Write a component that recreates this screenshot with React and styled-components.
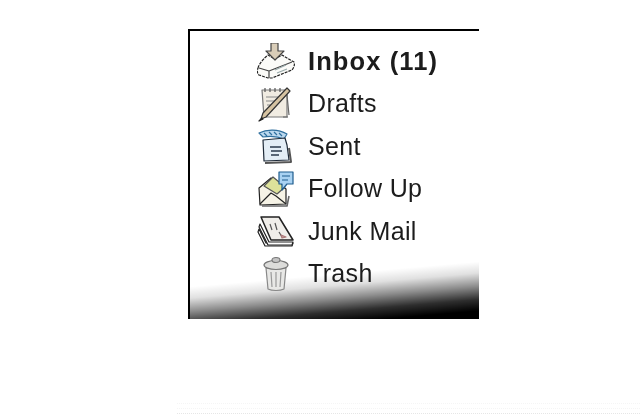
import React from 'react';
import styled, { createGlobalStyle } from 'styled-components';

const folders = [
    { name: 'Inbox (11)', icon: InboxIcon, bold: true },
    { name: 'Drafts', icon: DraftsIcon },
    { name: 'Sent', icon: SentIcon },
    { name: 'Follow Up', icon: FollowUpIcon },
    { name: 'Junk Mail', icon: JunkIcon },
    { name: 'Trash', icon: TrashIcon },
];

export default function App() {
    return (
        <>
            <GlobalStyle />
            <Page>
                <Panel>
                    <BottomShade />
                    <FolderList>
                        {folders.map(({ name, icon: Icon, bold }) => (
                            <FolderRow key={name}>
                                <Icon />
                                <FolderName $bold={bold}>{name}</FolderName>
                            </FolderRow>
                        ))}
                    </FolderList>
                </Panel>
                <RuleStack>
                    <DottedRule $tone="#f5f5f5" />
                    <DottedRule $tone="#f5f5f5" />
                    <DottedRule $tone="#e6e6e6" />
                </RuleStack>
            </Page>
        </>
    );
}

function Glyph({ children }) {
    return (
        <IconSvg viewBox="0 0 38 36" fill="none" stroke="#222" strokeWidth="1.2" strokeLinejoin="round">
            {children}
        </IconSvg>
    );
}

function InboxIcon() {
    return (
        <Glyph>
            <path d="M1 25c1-4 6-10 10-13l7 4 7-4 12 7c1 3 0 5-2 8l-20 8h-4l-9-3c-2-2-2-4-1-7z" fill="#fbfbf8" strokeDasharray="3 1" />
            <path d="M2 25l10 3 23-9M12 28v7" stroke="#444" />
            <path d="M14 0h7v8h6l-9 9-9-9h5z" fill="#d9cdb8" stroke="#444" />
            <path d="M18 27l11-5M20 30l10-4" stroke="#9aa" />
        </Glyph>
    );
}

function DraftsIcon() {
    return (
        <Glyph>
            <path d="M5 4h25v27H7z" fill="#f1ece2" stroke="#777" />
            <path d="M8 2v4M13 2v4M18 2v4M23 2v4" stroke="#555" />
            <path d="M9 11h12M9 15h9M10 19h7M10 23h4" stroke="#888" />
            <path d="M30 9l2 20M26 31h5" stroke="#666" />
            <path d="M4 33l2-6L30 2l3 3L9 31z" fill="#d6c3a2" stroke="#333" />
            <path d="M2 35l3-3 1 1z" fill="#111" />
        </Glyph>
    );
}

function SentIcon() {
    return (
        <Glyph>
            <path d="M2 5c8-4 19-4 28 1l-3 5c-7-3-14-3-21-2z" fill="#bcd9ef" stroke="#2f6f9e" />
            <path d="M7 5l3 3M12 4l3 3M17 4l3 3M22 5l3 3" stroke="#2f6f9e" />
            <path d="M6 12l22-2 2 7 2 15-25 1z" fill="#e4eef6" stroke="#1e2a38" />
            <path d="M13 19h11M14 23h11M14 27h8" stroke="#2b3b4d" strokeWidth="1.5" />
            <path d="M32 20l2 14-26 1" stroke="#555" strokeWidth="2" />
        </Glyph>
    );
}

function FollowUpIcon() {
    return (
        <Glyph>
            <path d="M2 17L14 7l15 11v15l-26 1z" fill="#f6f3e6" />
            <path d="M7 15l9-9 12 10-8 7z" fill="#dde29a" stroke="#555" />
            <path d="M3 33l11-11 5 3 10 8" />
            <path d="M5 35h25l2-10" stroke="#666" strokeWidth="1.6" />
            <path d="M22 1h14v12h-6l-5 6v-6h-3z" fill="#a9d2f2" stroke="#1f5d8e" />
            <path d="M25 5h8M25 9h6" stroke="#1f5d8e" />
        </Glyph>
    );
}

function JunkIcon() {
    return (
        <Glyph>
            <path d="M2 16l7 14h27l-1 3H8L1 19z" fill="#fff" />
            <path d="M3 11l9 18h24l-1 3H11L2 14z" fill="#fff" />
            <path d="M4 4h18l14 23H14z" fill="#f0eeea" strokeWidth="1.5" />
            <path d="M13 11l2 6M18 10l2 7M22 19l3 5" stroke="#555" />
            <path d="M24 22l5 2-4 1z" fill="#c9a0a0" stroke="#a77" />
        </Glyph>
    );
}

function TrashIcon() {
    return (
        <Glyph>
            <path d="M9 12l2 21c4 2 12 2 16 0l2-21z" fill="#e8e8e6" stroke="#888" />
            <ellipse cx="19" cy="9" rx="12" ry="4.5" fill="#dcdcda" stroke="#777" />
            <ellipse cx="19" cy="4" rx="4" ry="2.5" fill="#c4c4c4" stroke="#777" />
            <path d="M14 16l1 15M19 16v15M24 16l-1 15" stroke="#999" />
        </Glyph>
    );
}

const GlobalStyle = createGlobalStyle`
    html,
    body {
        margin: 0;
        background: #fff;
    }
`;

const Page = styled.div`
    width: 640px;
    height: 420px;
    padding-top: 29px;
    box-sizing: border-box;
    overflow: hidden;
`;

const Panel = styled.section`
    position: relative;
    box-sizing: border-box;
    width: 291px;
    height: 290px;
    margin-left: 188px;
    border-top: 2px solid #000;
    border-left: 2px solid #000;
    background: #fff;
`;

const FolderList = styled.ul`
    position: relative;
    list-style: none;
    margin: 0;
    padding: 8.75px 0 0 67px;
    filter: blur(0.45px);
`;

const FolderRow = styled.li`
    display: flex;
    align-items: center;
    gap: 13px;
    height: 42.5px;
`;

const IconSvg = styled.svg`
    flex: none;
    width: 38px;
    height: 36px;
`;

const FolderName = styled.span`
    font-family: 'Liberation Sans', Arial, sans-serif;
    font-size: ${({ $bold }) => ($bold ? '25.5px' : '25px')};
    font-weight: ${({ $bold }) => ($bold ? 700 : 400)};
    letter-spacing: ${({ $bold }) => ($bold ? '1.1px' : '0.35px')};
    color: #1c1c1c;
`;

const BottomShade = styled.div`
    position: absolute;
    left: 0;
    right: 0;
    bottom: 0;
    height: 57px;
    background: linear-gradient(
        175deg,
        rgba(0, 0, 0, 0) 30%,
        rgba(0, 0, 0, 0.12) 44%,
        rgba(0, 0, 0, 0.45) 60%,
        rgba(0, 0, 0, 0.82) 76%,
        #000 90%
    );
`;

const RuleStack = styled.div`
    display: flex;
    flex-direction: column;
    gap: 4px;
    margin: 84px 0 0 177px;
`;

const DottedRule = styled.div`
    border-top: 1px dotted ${({ $tone }) => $tone};
`;
